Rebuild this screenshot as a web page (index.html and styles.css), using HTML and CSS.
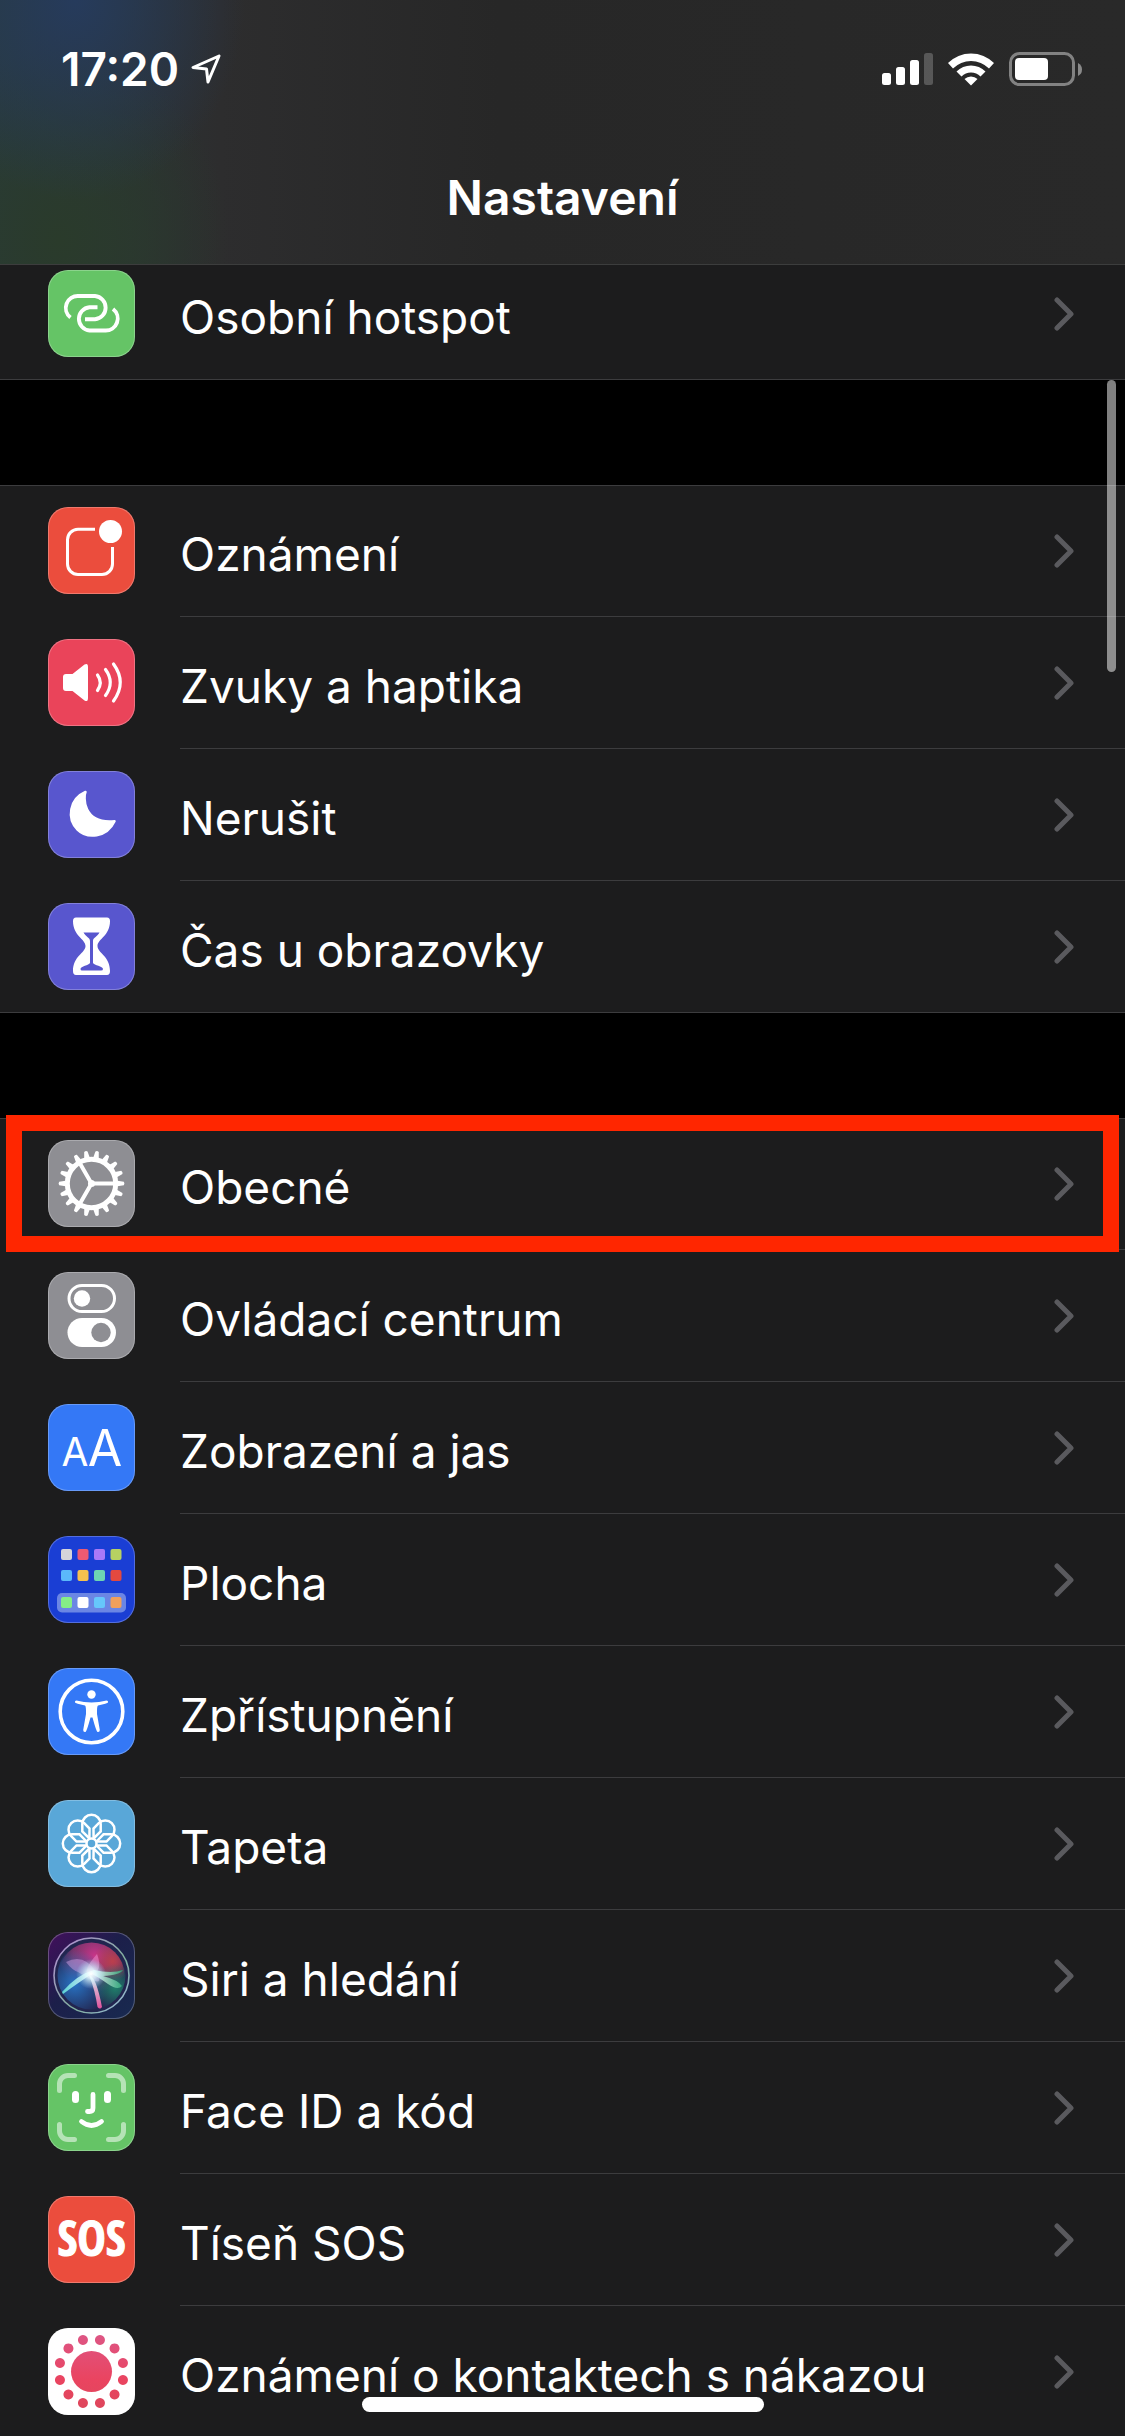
FILE: index.html
```html
<!DOCTYPE html>
<html lang="cs">
<head>
<meta charset="utf-8">
<meta name="viewport" content="width=device-width, initial-scale=1">
<title>Nastavení</title>
<link rel="stylesheet" href="styles.css">
</head>
<body>
<svg class="defs" aria-hidden="true">
  <symbol id="chevron" viewBox="0 0 20 34"><path d="M3 3l14 14L3 31" fill="none" stroke="#5a5a5e" stroke-width="5" stroke-linecap="round" stroke-linejoin="round"/></symbol>
</svg>
<div class="app">
  <header class="header">
    <div class="status">
      <div class="status-left">
        <span class="time">17:20</span>
        <svg class="location" viewBox="0 0 30 30" aria-hidden="true"><path d="M28 2L2 13.500L15.500 15L17 28Z" fill="none" stroke="#fff" stroke-width="3" stroke-linejoin="round"/></svg>
      </div>
      <svg class="status-right" viewBox="0 0 200 34" aria-hidden="true">
        <g fill="#fff">
          <rect x="0" y="21" width="9" height="12" rx="2.500"/>
          <rect x="14" y="15" width="9" height="18" rx="2.500"/>
          <rect x="28" y="8" width="9" height="25" rx="2.500"/>
          <rect x="42" y="1" width="9" height="32" rx="2.500" opacity=".22"/>
          <path d="M66 11a32.500 32.500 0 0 1 46 0l-5 5.500a25.500 25.500 0 0 0-36 0z"/>
          <path d="M74.500 19.500a20.500 20.500 0 0 1 29 0l-5 5a13.500 13.500 0 0 0-19 0z"/>
          <path d="M82.500 27a9.500 9.500 0 0 1 13 0L89 33.500z"/>
          <rect x="133" y="6" width="33" height="22" rx="4"/>
          <path d="M196 11v13q4-2 4-6.500T196 11z" opacity=".45"/>
        </g>
        <rect x="128.500" y="1.500" width="63" height="31" rx="9" fill="none" stroke="#fff" stroke-opacity=".42" stroke-width="3"/>
      </svg>
    </div>
    <h1 class="title">Nastavení</h1>
  </header>

  <main class="list">
    <nav class="group group-scrolled" aria-label="Připojení">
      <a class="row" href="#hotspot">
        <svg class="tile green" viewBox="0 0 87 87" aria-hidden="true"><g fill="none" stroke="#fff" stroke-width="3.900"><path d="M22.500 47.500A12 12 0 0 1 30.500 26H47a11.700 11.700 0 0 1 0 23.300H37"/><path d="M49.500 37.200H41.500a11.700 11.700 0 0 0 0 23.300H57A12 12 0 0 0 65 39"/></g></svg>
        <span class="cell"><span class="label">Osobní hotspot</span><svg class="chevron" aria-hidden="true"><use href="#chevron"/></svg></span>
      </a>
    </nav>

    <nav class="group" aria-label="Upozornění">
      <a class="row" href="#oznameni">
        <svg class="tile red" viewBox="0 0 87 87" aria-hidden="true"><path d="M47 22.300H30a10.500 10.500 0 0 0-10.500 10.500V57A10.500 10.500 0 0 0 30 67.500H54A10.500 10.500 0 0 0 64.500 57V40" fill="none" stroke="#fff" stroke-width="3"/><circle cx="62.500" cy="24.500" r="11.500" fill="#fff"/></svg>
        <span class="cell"><span class="label">Oznámení</span><svg class="chevron" aria-hidden="true"><use href="#chevron"/></svg></span>
      </a>
      <a class="row" href="#zvuky">
        <svg class="tile pink" viewBox="0 0 87 87" aria-hidden="true"><path d="M18 35H24.500L36.500 25.500Q40 23.500 40 28V59Q40 63.500 36.500 61.500L24.500 52H18Q15 52 15 49V38Q15 35 18 35Z" fill="#fff"/><g fill="none" stroke="#fff" stroke-width="3.200" stroke-linecap="round"><path d="M49.500 36Q55 43.500 49.500 51.500"/><path d="M57.500 30.500Q67 43.500 57.500 56.500"/><path d="M65.500 25Q79 43.500 65.500 62"/></g></svg>
        <span class="cell"><span class="label">Zvuky a haptika</span><svg class="chevron" aria-hidden="true"><use href="#chevron"/></svg></span>
      </a>
      <a class="row" href="#nerusit">
        <svg class="tile indigo" viewBox="0 0 87 87" aria-hidden="true"><path d="M37.500 21C35.500 25 33.800 53.500 66.500 50.200C58.500 67 39 68 29.500 58.500C18.500 47.500 21.500 28 37.500 21Z" fill="#fff" stroke="#fff" stroke-width="2.500" stroke-linejoin="round"/></svg>
        <span class="cell"><span class="label">Nerušit</span><svg class="chevron" aria-hidden="true"><use href="#chevron"/></svg></span>
      </a>
      <a class="row" href="#cas">
        <svg class="tile indigo" viewBox="0 0 87 87" aria-hidden="true"><path d="M28 14.500H59Q62 14.500 62 18C62 33 49.500 36 49.500 43S62 53 62 68Q62 72 59 72H28Q25 72 25 68C25 53 37.500 50 37.500 43S25 33 25 18Q25 14.500 28 14.500Z" fill="#fff"/><path d="M35.500 29.500H51.500C49 34 45 34.500 45 38V60C46 62.500 55 63 55 66Q55 67.500 53 67.500H34Q32.500 67.500 32.500 66C32.500 63 41 62.500 42 60V38C42 34.500 38 34 35.500 29.500Z" fill="#5856ce"/></svg>
        <span class="cell"><span class="label">Čas u obrazovky</span><svg class="chevron" aria-hidden="true"><use href="#chevron"/></svg></span>
      </a>
    </nav>

    <nav class="group" aria-label="Systém">
      <a class="row row-marked" href="#obecne">
        <svg class="tile gray" viewBox="0 0 87 87" aria-hidden="true">
          <defs>
            <path id="tooth" d="M26 -2.800L32.300 -1.700Q33.500 0 32.300 1.700L26 2.800Z"/>
            <g id="teeth"><use href="#tooth"/><use href="#tooth" transform="rotate(20)"/><use href="#tooth" transform="rotate(40)"/></g>
          </defs>
          <g transform="translate(43.500 43.500)" fill="#fff">
            <use href="#teeth"/><use href="#teeth" transform="rotate(60)"/><use href="#teeth" transform="rotate(120)"/><use href="#teeth" transform="rotate(180)"/><use href="#teeth" transform="rotate(240)"/><use href="#teeth" transform="rotate(300)"/>
            <circle r="24.200" fill="none" stroke="#fff" stroke-width="5"/>
            <path d="M23 0H0L-11.500 -20M0 0L-11.500 20" fill="none" stroke="#fff" stroke-width="4"/>
            <circle r="3.500"/>
          </g>
        </svg>
        <span class="cell"><span class="label">Obecné</span><svg class="chevron" aria-hidden="true"><use href="#chevron"/></svg></span>
      </a>
      <a class="row" href="#centrum">
        <svg class="tile gray" viewBox="0 0 87 87" aria-hidden="true"><rect x="21" y="13.500" width="45.500" height="26" rx="13" fill="none" stroke="#fff" stroke-width="3"/><circle cx="34" cy="26.500" r="8.200" fill="#fff"/><rect x="19.500" y="46" width="48.500" height="29" rx="14.500" fill="#fff"/><circle cx="53" cy="60.500" r="9.700" fill="#8e8e93"/></svg>
        <span class="cell"><span class="label">Ovládací centrum</span><svg class="chevron" aria-hidden="true"><use href="#chevron"/></svg></span>
      </a>
      <a class="row" href="#zobrazeni">
        <svg class="tile blue" viewBox="0 0 87 87" aria-hidden="true"><g class="glyph"><text x="27" y="62" font-size="39">A</text><text x="57" y="62" font-size="50">A</text></g></svg>
        <span class="cell"><span class="label">Zobrazení a jas</span><svg class="chevron" aria-hidden="true"><use href="#chevron"/></svg></span>
      </a>
      <a class="row" href="#plocha">
        <svg class="tile navy" viewBox="0 0 87 87" aria-hidden="true">
          <rect x="9" y="57" width="69" height="19.500" rx="5" fill="#6b86e4"/>
          <rect x="13" y="13" width="11" height="11" rx="2" fill="#d5d5da"/><rect x="29.500" y="13" width="11" height="11" rx="2" fill="#ec5a72"/><rect x="46" y="13" width="11" height="11" rx="2" fill="#ab79f8"/><rect x="62.500" y="13" width="11" height="11" rx="2" fill="#b7d162"/>
          <rect x="13" y="34" width="11" height="11" rx="2" fill="#5bb8fb"/><rect x="29.500" y="34" width="11" height="11" rx="2" fill="#f6c14f"/><rect x="46" y="34" width="11" height="11" rx="2" fill="#6dd5b3"/><rect x="62.500" y="34" width="11" height="11" rx="2" fill="#e3493f"/>
          <rect x="13" y="61" width="11" height="11" rx="2" fill="#85ee86"/><rect x="29.500" y="61" width="11" height="11" rx="2" fill="#fff"/><rect x="46" y="61" width="11" height="11" rx="2" fill="#66c7fb"/><rect x="62.500" y="61" width="11" height="11" rx="2" fill="#f0a05b"/>
        </svg>
        <span class="cell"><span class="label">Plocha</span><svg class="chevron" aria-hidden="true"><use href="#chevron"/></svg></span>
      </a>
      <a class="row" href="#zpristupneni">
        <svg class="tile blue" viewBox="0 0 87 87" aria-hidden="true"><circle cx="43.500" cy="43.500" r="31.300" fill="none" stroke="#fff" stroke-width="3.600"/><circle cx="43.500" cy="26.500" r="4.200" fill="#fff"/><path d="M28.500 32.500Q36 34.500 43.500 34.500T58.500 32.500Q60.500 32.500 60 34.500Q59.500 35.500 50 37.500Q48.800 38 49 46L51.800 62Q51.800 64.500 49.500 64Q48.300 63.500 44.500 49.500H42.500Q38.700 63.500 37.500 64Q35.200 64.500 35.200 62L38 46Q38.200 38 37 37.500Q27.500 35.500 27 34.500Q26.500 32.500 28.500 32.500Z" fill="#fff"/></svg>
        <span class="cell"><span class="label">Zpřístupnění</span><svg class="chevron" aria-hidden="true"><use href="#chevron"/></svg></span>
      </a>
      <a class="row" href="#tapeta">
        <svg class="tile sky" viewBox="0 0 87 87" aria-hidden="true">
          <defs><path id="petal" d="M-2 -5L-9.200 -12V-19.500A9.200 9.200 0 0 1 9.200 -19.500V-12L2 -5"/></defs>
          <g transform="translate(43.500 43.500)" fill="none" stroke="#fff" stroke-width="2.500">
            <use href="#petal"/><use href="#petal" transform="rotate(45)"/><use href="#petal" transform="rotate(90)"/><use href="#petal" transform="rotate(135)"/><use href="#petal" transform="rotate(180)"/><use href="#petal" transform="rotate(225)"/><use href="#petal" transform="rotate(270)"/><use href="#petal" transform="rotate(315)"/>
            <circle r="5"/>
          </g>
        </svg>
        <span class="cell"><span class="label">Tapeta</span><svg class="chevron" aria-hidden="true"><use href="#chevron"/></svg></span>
      </a>
      <a class="row" href="#siri">
        <svg class="tile siri" viewBox="0 0 87 87" aria-hidden="true">
          <defs>
            <radialGradient id="s-pink" cx=".55" cy=".2" r=".55"><stop offset="0" stop-color="#c9358a"/><stop offset=".6" stop-color="#a03a78" stop-opacity=".7"/><stop offset="1" stop-color="#a03a78" stop-opacity="0"/></radialGradient>
            <radialGradient id="s-red" cx=".82" cy=".28" r=".3"><stop offset="0" stop-color="#bb3f4c"/><stop offset="1" stop-color="#bb3f4c" stop-opacity="0"/></radialGradient>
            <radialGradient id="s-blue" cx=".25" cy=".62" r=".5"><stop offset="0" stop-color="#2873c4"/><stop offset="1" stop-color="#2873c4" stop-opacity="0"/></radialGradient>
            <radialGradient id="s-green" cx=".85" cy=".68" r=".35"><stop offset="0" stop-color="#1f7f6a"/><stop offset="1" stop-color="#1f7f6a" stop-opacity="0"/></radialGradient>
            <radialGradient id="s-glow"><stop offset="0" stop-color="#fff"/><stop offset=".35" stop-color="#dffcff" stop-opacity=".8"/><stop offset="1" stop-color="#9fe8ff" stop-opacity="0"/></radialGradient>
            <linearGradient id="s-ring" x1="0" y1="0" x2="1" y2="1"><stop offset="0" stop-color="#b78bd8"/><stop offset=".6" stop-color="#7fae9c"/><stop offset="1" stop-color="#9db9e0"/></linearGradient>
            <linearGradient id="s-teal" x1="0" x2="1"><stop offset="0" stop-color="#63e8e0"/><stop offset=".5" stop-color="#fff"/><stop offset="1" stop-color="#2fae7c"/></linearGradient>
            <linearGradient id="s-rose" x1="0" y1="0" x2="0" y2="1"><stop offset="0" stop-color="#fff" stop-opacity=".8"/><stop offset="1" stop-color="#e0509c"/></linearGradient>
          </defs>
          <circle cx="43.500" cy="43.500" r="37.500" fill="#22254f"/>
          <circle cx="43.500" cy="43.500" r="33" fill="url(#s-pink)"/><circle cx="43.500" cy="43.500" r="33" fill="url(#s-red)"/><circle cx="43.500" cy="43.500" r="34" fill="url(#s-blue)"/><circle cx="43.500" cy="43.500" r="34" fill="url(#s-green)"/>
          <path d="M18 30Q36 21 48 40T30 40Q24 38 18 30Z" fill="#d9a7e8" opacity=".45"/>
          <path d="M49 22Q56 40 42 43Q33 40 49 22Z" fill="#f08ad0" opacity=".55"/>
          <path d="M14 60Q30 42 46 38Q64 42 75 38Q72 43 55 44Q70 48 74 54Q70 59 60 52Q50 45 44 42Q34 48 15 62Z" fill="url(#s-teal)" opacity=".85"/>
          <path d="M41 43Q48 44 54 75Q52 78 49.500 75Q47 58 41 43Z" fill="url(#s-rose)"/>
          <circle cx="43" cy="42" r="15" fill="url(#s-glow)"/>
          <circle cx="43.500" cy="43.500" r="37.500" fill="none" stroke="url(#s-ring)" stroke-width="1.600"/>
        </svg>
        <span class="cell"><span class="label">Siri a hledání</span><svg class="chevron" aria-hidden="true"><use href="#chevron"/></svg></span>
      </a>
      <a class="row" href="#faceid">
        <svg class="tile green" viewBox="0 0 87 87" aria-hidden="true"><g fill="none" stroke="#fff" stroke-linecap="round" stroke-width="5"><path d="M11.500 26.500V20A8.500 8.500 0 0 1 20 11.500H26.500M60.500 11.500H67A8.500 8.500 0 0 1 75.500 20V26.500M75.500 60.500V67A8.500 8.500 0 0 1 67 75.500H60.500M26.500 75.500H20A8.500 8.500 0 0 1 11.500 67V60.500" opacity=".52"/><path d="M45 30.500V44Q45 47.500 41.500 47.500H39.500M33.500 57.500Q43.500 65.500 53.500 57.500" stroke-width="4.800"/></g><rect x="24" y="27" width="7" height="12" rx="3.500" fill="#fff"/><rect x="56" y="27" width="7" height="12" rx="3.500" fill="#fff"/></svg>
        <span class="cell"><span class="label">Face ID a kód</span><svg class="chevron" aria-hidden="true"><use href="#chevron"/></svg></span>
      </a>
      <a class="row" href="#sos">
        <svg class="tile red" viewBox="0 0 87 87" aria-hidden="true"><text class="sos" x="43.500" y="60">SOS</text></svg>
        <span class="cell"><span class="label">Tíseň SOS</span><svg class="chevron" aria-hidden="true"><use href="#chevron"/></svg></span>
      </a>
      <a class="row" href="#kontakty">
        <svg class="tile white" viewBox="0 0 87 87" aria-hidden="true">
          <defs><linearGradient id="rose" gradientUnits="userSpaceOnUse" x1="0" y1="6" x2="0" y2="82"><stop offset="0" stop-color="#dd5685"/><stop offset=".6" stop-color="#ea4460"/><stop offset="1" stop-color="#dd475c"/></linearGradient></defs>
          <g fill="url(#rose)"><circle cx="43.500" cy="43.500" r="20.500"/><path d="M35 7a5 5 0 1 1-.1 0zM52 7a5 5 0 1 1-.1 0zM20.500 15.400a5 5 0 1 1-.1 0zM66.600 15.400a5 5 0 1 1-.1 0zM12 30a5 5 0 1 1-.1 0zM75 30a5 5 0 1 1-.1 0zM12 47a5 5 0 1 1-.1 0zM75 47a5 5 0 1 1-.1 0zM20.500 61.500a5 5 0 1 1-.1 0zM66.600 61.500a5 5 0 1 1-.1 0zM35 70a5 5 0 1 1-.1 0zM52 70a5 5 0 1 1-.1 0z"/></g>
        </svg>
        <span class="cell"><span class="label">Oznámení o kontaktech s nákazou</span><svg class="chevron" aria-hidden="true"><use href="#chevron"/></svg></span>
      </a>
    </nav>
    <div class="scroll-thumb"></div>
  </main>
  <div class="home-indicator"></div>
</div>
</body>
</html>
```
FILE: styles.css
```css
* { box-sizing: border-box; }

body {
  margin: 0;
  background: #000;
  color: #fff;
  font-family: Inter, "Liberation Sans", sans-serif;
}

.defs { position: absolute; width: 0; height: 0; }

.app {
  position: relative;
  display: flex;
  flex-direction: column;
  height: 100vh;
  overflow: hidden;
}

/* Header */
.header {
  flex: none;
  padding: 44px 0 36px;
  border-bottom: 1px solid #3c3d3d;
  background:
    radial-gradient(ellipse 170px 200px at 75px 0, #263b5c 0%, rgba(38, 59, 92, .5) 50%, rgba(38, 59, 92, 0) 100%),
    radial-gradient(ellipse 170px 190px at 60px 240px, #2a3b2b 0%, rgba(42, 59, 43, .6) 50%, rgba(42, 59, 43, 0) 100%),
    linear-gradient(90deg, #293a3d 0, #2d2d2e 220px, #272727 500px, #292929 100%);
}

.status {
  display: flex;
  justify-content: space-between;
  align-items: center;
  height: 50px;
  padding: 0 43px 0 61px;
}

.status-left { display: flex; align-items: center; gap: 12px; }
.time { font-size: 46px; line-height: 50px; font-weight: 600; }
.location { width: 30px; height: 30px; }
.status-right { width: 200px; height: 34px; }

.title {
  margin: 74px 0 0;
  font-size: 48px;
  line-height: 60px;
  font-weight: 600;
  text-align: center;
}

/* List */
.list {
  position: relative;
  flex: 1;
  min-height: 0;
  overflow: hidden;
}

.group {
  margin-bottom: 105px;
  background: #1c1c1d;
  box-shadow: inset 0 1px #3c3c3e;
}

/* The first group is partly scrolled under the header. */
.group-scrolled { margin-top: -17px; }

.row {
  position: relative;
  display: flex;
  align-items: stretch;
  gap: 45px;
  height: 132px;
  padding-left: 48px;
  color: inherit;
  text-decoration: none;
}

.row:last-child { border-bottom: 1px solid #3c3c3e; }
.row:last-child .cell { border-bottom: 0; }

.cell {
  flex: 1;
  display: flex;
  align-items: center;
  justify-content: space-between;
  padding-right: 51px;
  border-bottom: 1px solid #3c3c3e;
}

.label { padding-top: 6px; font-size: 46px; line-height: 60px; white-space: nowrap; }
.chevron { flex: none; width: 20px; height: 34px; }

.row-marked::after {
  content: "";
  position: absolute;
  inset: -3px 6px -2px;
  border: 16px solid #ff2600;
}

/* Icon tiles */
.tile {
  flex: none;
  width: 87px;
  height: 87px;
  margin-top: 22px;
  border-radius: 20px;
  box-shadow: 0 0 0 1px rgba(255, 255, 255, .25) inset;
}

.green { background: #65c466; }
.red { background: #eb4d3d; }
.pink { background: #ea445a; }
.indigo { background: #5856ce; }
.gray { background: #8e8e93; }
.blue { background: #3478f6; }
.navy { background: #1a3ed4; }
.sky { background: #59a7d8; }
.siri { background: linear-gradient(135deg, #430f5c, #1c1f4a 45%, #182a50); }
.white { background: #fff; }

.glyph { fill: #fff; font-weight: 400; text-anchor: middle; }

.sos {
  fill: #fff;
  stroke: #fff;
  stroke-width: 1px;
  font-family: "Liberation Sans Narrow", "Open Sans Condensed", Lato, sans-serif;
  font-size: 48px;
  font-weight: 700;
  text-anchor: middle;
}

/* Overlays */
.scroll-thumb {
  position: absolute;
  top: 115px;
  right: 9px;
  width: 9px;
  height: 292px;
  border-radius: 5px;
  background: rgba(255, 255, 255, .5);
}

.home-indicator {
  position: absolute;
  bottom: 24px;
  left: 50%;
  width: 402px;
  height: 15px;
  margin-left: -201px;
  border-radius: 8px;
  background: #fff;
}
```
